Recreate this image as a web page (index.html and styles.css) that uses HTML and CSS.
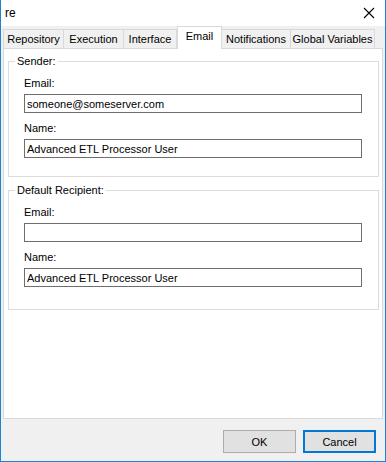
FILE: index.html
```html
<!DOCTYPE html>
<html lang="en">
<head>
  <meta charset="UTF-8">
  <title>re</title>
  <link rel="stylesheet" href="styles.css">
</head>
<body>
  <div class="window">
    <div class="titlebar">
      <span class="title">re</span>
      <svg class="close" width="12" height="12" viewBox="0 0 12 12">
        <path d="M1 1 L11 11 M11 1 L1 11" stroke="#000" stroke-width="1.1" fill="none"/>
      </svg>
    </div>

    <div class="body">
      <!-- tabs -->
      <div class="tabs">
        <div class="tab w-repo">Repository</div>
        <div class="tab w-exec">Execution</div>
        <div class="tab w-intf">Interface</div>
        <div class="tab w-mail active">Email</div>
        <div class="tab w-noti">Notifications</div>
        <div class="tab w-glob">Global Variables</div>
      </div>

      <div class="page">
        <fieldset class="group">
          <legend>Sender:</legend>
          <div class="lbl">Email:</div>
          <input class="edit" type="text" value="someone@someserver.com">
          <div class="lbl gap">Name:</div>
          <input class="edit" type="text" value="Advanced ETL Processor User">
        </fieldset>

        <fieldset class="group second">
          <legend>Default Recipient:</legend>
          <div class="lbl">Email:</div>
          <input class="edit" type="text" value="">
          <div class="lbl gap">Name:</div>
          <input class="edit" type="text" value="Advanced ETL Processor User">
        </fieldset>
      </div>

      <div class="buttons">
        <button class="btn">OK</button>
        <button class="btn default">Cancel</button>
      </div>
    </div>
  </div>
</body>
</html>
```

FILE: styles.css
```css
html, body { margin: 0; padding: 0; background: #fff; }
body { font-family: "Liberation Sans", Arial, sans-serif; font-size: 11px; color: #000; }

.window { width: 384px; height: 461px; border: 1px solid #1a85d6; border-top: 0; display: flex; flex-direction: column; background: #f0f0f0; }
.titlebar { height: 26px; flex: none; background: #fff; display: flex; align-items: center; justify-content: space-between; padding: 0 10px 0 4px; }
.title { font-size: 12px; margin-top: -1px; }
.close { margin-top: -1px; }

.body { flex: 1; display: flex; flex-direction: column; padding: 0 2px; }

.tabs { display: flex; align-items: flex-end; height: 22px; flex: none; position: relative; z-index: 1; }
.tab { height: 19px; box-sizing: border-box; border: 1px solid #d9d9d9; border-bottom: 0; margin-right: -1px; background: #f0f0f0; text-align: center; line-height: 18px; }
.tab.active { height: 23px; margin-bottom: -1px; margin-left: 1px; background: #fff; line-height: 19px; }
.w-repo { width: 61px; }
.w-exec { width: 61px; }
.w-intf { width: 54px; }
.w-mail { width: 45px; }
.w-noti { width: 70px; }
.w-glob { width: 85px; }

.page { height: 371px; box-sizing: border-box; width: 380px; border: 1px solid #d9d9d9; background: #fff; padding-top: 5px; }

.group { margin: 0 3px 0 4px; padding: 8px 16px 18px 15px; border: 1px solid #dcdcdc; }
.group.second { margin-top: 6px; padding-bottom: 22px; }
.group legend { padding: 0 2px; margin-left: -9px; line-height: 14px; }

.lbl { line-height: 14px; }
.lbl.gap { margin-top: 8px; }
.edit { display: block; width: 100%; height: 19px; box-sizing: border-box; margin: 4px 0 0; border: 1px solid #6e6e6e; padding: 0 2px; font: inherit; color: #000; outline: none; }

.buttons { flex: 1; display: flex; justify-content: flex-end; align-items: flex-start; gap: 7px; padding: 11px 7px 0 0; }
.btn { width: 73px; height: 23px; box-sizing: border-box; background: #e1e1e1; border: 1px solid #adadad; font: inherit; color: #000; padding: 0; }
.btn.default { border: 2px solid #0078d7; }
```
